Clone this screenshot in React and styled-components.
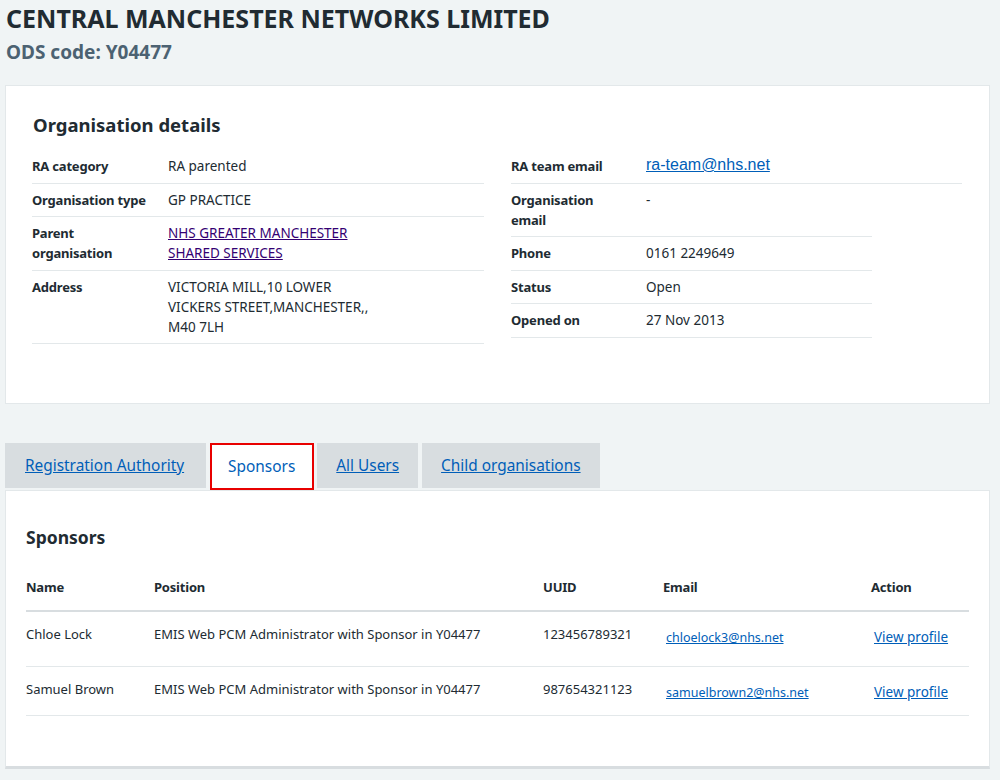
import styled, { createGlobalStyle } from "styled-components";

const GlobalStyle = createGlobalStyle`
	body {
		margin: 0;
		background: #f0f4f5;
		color: #212b32;
		font-family: "Noto Sans", "Liberation Sans", sans-serif;
	}
`;

const details = [
	{ key: "RA category", value: "RA parented" },
	{ key: "Organisation type", value: "GP PRACTICE" },
	{ key: "Parent organisation", value: "NHS GREATER MANCHESTER SHARED SERVICES", link: true },
	{ key: "Address", value: "VICTORIA MILL,10 LOWER VICKERS STREET,MANCHESTER,, M40 7LH" },
];

const contact = [
	{ key: "Organisation email", value: "-" },
	{ key: "Phone", value: "0161 2249649" },
	{ key: "Status", value: "Open" },
	{ key: "Opened on", value: "27 Nov 2013" },
];

const tabs = ["Registration Authority", "Sponsors", "All Users", "Child organisations"];

const sponsors = [
	{
		name: "Chloe Lock",
		position: "EMIS Web PCM Administrator with Sponsor in Y04477",
		uuid: "123456789321",
		email: "chloelock3@nhs.net",
	},
	{
		name: "Samuel Brown",
		position: "EMIS Web PCM Administrator with Sponsor in Y04477",
		uuid: "987654321123",
		email: "samuelbrown2@nhs.net",
	},
];

const App = () => {
	return (
		<>
			<GlobalStyle />
			<Page>
				<Title>CENTRAL MANCHESTER NETWORKS LIMITED</Title>
				<Caption>ODS code: Y04477</Caption>

				<Card>
					<CardHeading>Organisation details</CardHeading>
					<Columns>
						<SummaryList $width={452}>
							{details.map((d) => (
								<Row key={d.key}>
									<Key $width={136}>{d.key}</Key>
									<Value>
										{d.link ? <Visited href="#">{d.value}</Visited> : d.value}
									</Value>
								</Row>
							))}
						</SummaryList>
						<SummaryList $width={451}>
							<Row>
								<Key $width={135}>RA team email</Key>
								<Value>
									<MailLink href="#">ra-team@nhs.net</MailLink>
								</Value>
							</Row>
							{contact.map((d) => (
								<Row key={d.key} $narrow>
									<Key $width={135}>{d.key}</Key>
									<Value>{d.value}</Value>
								</Row>
							))}
						</SummaryList>
					</Columns>
				</Card>

				<TabList>
					{tabs.map((t) =>
						t === "Sponsors" ? (
							<Tab key={t} $active>
								{t}
							</Tab>
						) : (
							<Tab key={t}>
								<TabLink href="#">{t}</TabLink>
							</Tab>
						)
					)}
				</TabList>

				<Panel>
					<PanelHeading>Sponsors</PanelHeading>
					<Table>
						<colgroup>
							<col style={{ width: 128 }} />
							<col style={{ width: 389 }} />
							<col style={{ width: 120 }} />
							<col style={{ width: 208 }} />
							<col />
						</colgroup>
						<thead>
							<tr>
								<Th>Name</Th>
								<Th>Position</Th>
								<Th>UUID</Th>
								<Th>Email</Th>
								<Th>Action</Th>
							</tr>
						</thead>
						<tbody>
							{sponsors.map((s, i) => (
								<tr key={s.uuid}>
									<Td $extra={i === 0}>{s.name}</Td>
									<Td $extra={i === 0}>{s.position}</Td>
									<Td $extra={i === 0}>{s.uuid}</Td>
									<Td $extra={i === 0} $link>
										<TableLink href="#" $small>
											{s.email}
										</TableLink>
									</Td>
									<Td $extra={i === 0} $link>
										<TableLink href="#">View profile</TableLink>
									</Td>
								</tr>
							))}
						</tbody>
					</Table>
				</Panel>
			</Page>
		</>
	);
};

export default App;

const Page = styled.div`
	padding: 0 10px 0 5px;
`;

const Title = styled.h1`
	margin: 0;
	padding: 2px 0 0 1px;
	font-size: 25px;
	line-height: 32px;
	font-weight: 700;
	color: #212b32;
`;

const Caption = styled.div`
	margin: 4px 0 0 1px;
	font-size: 19px;
	line-height: 28px;
	font-weight: 700;
	color: #4c6272;
`;

const Card = styled.section`
	margin-top: 19px;
	background: #fff;
	border: 1px solid #e3e8ea;
	padding: 25px 26px 59px 26px;
`;

const CardHeading = styled.h2`
	margin: 0 0 11px 1px;
	font-size: 18.5px;
	line-height: 28px;
	font-weight: 700;
`;

const Columns = styled.div`
	display: flex;
	gap: 27px;
`;

const SummaryList = styled.dl`
	margin: 0;
	width: ${({ $width }) => $width}px;
	font-size: 13.5px;
	line-height: 20px;
`;

const Row = styled.div`
	display: flex;
	padding: 6px 0 6.5px;
	border-bottom: 1px solid #e3e8ea;
	width: ${({ $narrow }) => ($narrow ? "361px" : "auto")};
`;

const Key = styled.dt`
	flex: 0 0 ${({ $width }) => $width}px;
	font-size: 13px;
	letter-spacing: -0.2px;
	font-weight: 700;
	padding-right: 18px;
	box-sizing: border-box;
`;

const Value = styled.dd`
	margin: 0;
	max-width: 205px;
`;

const Visited = styled.a`
	color: #330072;
	text-decoration: underline;
`;

const MailLink = styled.a`
	font-family: "Liberation Sans", Arial, sans-serif;
	font-size: 16px;
	color: #005eb8;
	text-decoration: underline;
	position: relative;
	top: -1px;
`;

const TabList = styled.div`
	display: flex;
	align-items: flex-start;
	gap: 4px;
	margin-top: 39px;
`;

const Tab = styled.div`
	box-sizing: border-box;
	height: ${({ $active }) => ($active ? "47px" : "45px")};
	display: flex;
	align-items: center;
	padding: ${({ $active }) => ($active ? "0 17px 0 16px" : "0 19px")};
	margin-right: ${({ $active }) => ($active ? "-1px" : "0")};
	margin-bottom: ${({ $active }) => ($active ? "-2px" : "0")};
	background: ${({ $active }) => ($active ? "#fff" : "#d8dde0")};
	border: ${({ $active }) => ($active ? "2px solid #e80000" : "none")};
	color: #005eb8;
	font-size: 15.4px;
	position: relative;
	z-index: 1;
	&:first-child {
		padding: 0 22px 0 20px;
	}
`;

const TabLink = styled.a`
	color: #005eb8;
	text-decoration: underline;
`;

const Panel = styled.section`
	margin-top: 2px;
	background: #fff;
	border: 1px solid #e3e8ea;
	border-bottom: 3px solid #d8dde0;
	padding: 34px 20px 50px 20px;
`;

const PanelHeading = styled.h3`
	margin: 0 0 22px 0;
	font-size: 17.5px;
	line-height: 24px;
	font-weight: 700;
`;

const Table = styled.table`
	width: 943px;
	border-collapse: collapse;
	table-layout: fixed;
	font-size: 13px;
	line-height: 20px;
`;

const Th = styled.th`
	text-align: left;
	font-weight: 700;
	letter-spacing: -0.2px;
	padding: 6px 0 13px;
	border-bottom: 2px solid #d8dde0;
`;

const Td = styled.td`
	vertical-align: top;
	padding-top: ${({ $link }) => ($link ? 15 : 12)}px;
	padding-left: ${({ $link }) => ($link ? 3 : 0)}px;
	padding-bottom: ${({ $extra, $link }) => ($extra ? 21 : 15) - ($link ? 3 : 0)}px;
	border-bottom: 1px solid #e3e8ea;
`;

const TableLink = styled.a`
	color: #005eb8;
	text-decoration: underline;
	font-size: ${({ $small }) => ($small ? "12.5px" : "13.5px")};
`;
